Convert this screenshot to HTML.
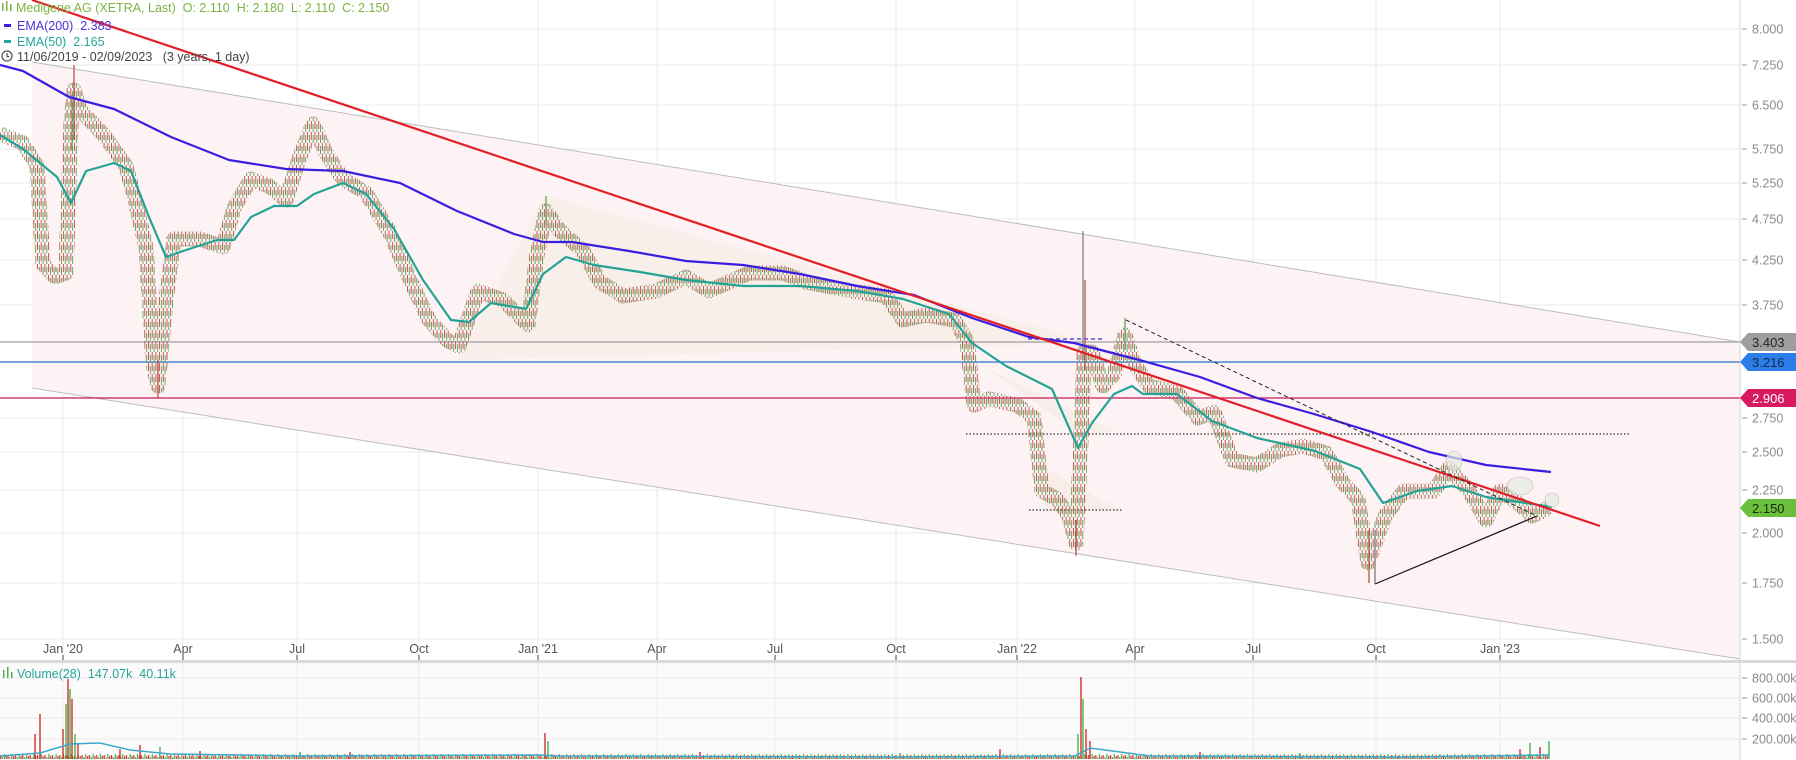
<!DOCTYPE html>
<html><head><meta charset="utf-8"><style>
html,body{margin:0;padding:0;background:#fff;width:1796px;height:760px;overflow:hidden}
svg{display:block;font-family:"Liberation Sans",sans-serif}
</style></head><body>
<svg width="1796" height="760" xmlns="http://www.w3.org/2000/svg">
<defs>
<pattern id="bp" patternUnits="userSpaceOnUse" width="3.7" height="11">
<rect x="0" y="0" width="1" height="8" fill="#b5473c"/>
<rect x="1.85" y="3" width="1" height="8" fill="#5b9a4f"/>
</pattern>
<pattern id="vp" patternUnits="userSpaceOnUse" x="0" y="753" width="7.4" height="6">
<rect x="0" y="2" width="1.2" height="4" fill="#d32f2f"/>
<rect x="1.85" y="4" width="1.2" height="2" fill="#4caf50"/>
<rect x="3.7" y="1" width="1.2" height="5" fill="#4caf50"/>
<rect x="5.55" y="3" width="1.2" height="3" fill="#d32f2f"/>
</pattern>
</defs>
<rect x="0" y="0" width="1796" height="760" fill="#fff"/>
<rect x="0" y="663" width="1740" height="97" fill="#fbfbfb"/>
<g stroke="#ebebeb" stroke-width="1">
<line x1="0" y1="29" x2="1740" y2="29"/><line x1="0" y1="65" x2="1740" y2="65"/><line x1="0" y1="105" x2="1740" y2="105"/><line x1="0" y1="149" x2="1740" y2="149"/><line x1="0" y1="183" x2="1740" y2="183"/><line x1="0" y1="219" x2="1740" y2="219"/><line x1="0" y1="260" x2="1740" y2="260"/><line x1="0" y1="305" x2="1740" y2="305"/><line x1="0" y1="418" x2="1740" y2="418"/><line x1="0" y1="452" x2="1740" y2="452"/><line x1="0" y1="490" x2="1740" y2="490"/><line x1="0" y1="533" x2="1740" y2="533"/><line x1="0" y1="583" x2="1740" y2="583"/><line x1="0" y1="639" x2="1740" y2="639"/>
<line x1="0" y1="678" x2="1740" y2="678"/><line x1="0" y1="698" x2="1740" y2="698"/><line x1="0" y1="718" x2="1740" y2="718"/><line x1="0" y1="739" x2="1740" y2="739"/>
<line x1="63" y1="0" x2="63" y2="760"/><line x1="183" y1="0" x2="183" y2="760"/><line x1="297" y1="0" x2="297" y2="760"/><line x1="419" y1="0" x2="419" y2="760"/><line x1="538" y1="0" x2="538" y2="760"/><line x1="657" y1="0" x2="657" y2="760"/><line x1="775" y1="0" x2="775" y2="760"/><line x1="896" y1="0" x2="896" y2="760"/><line x1="1017" y1="0" x2="1017" y2="760"/><line x1="1135" y1="0" x2="1135" y2="760"/><line x1="1253" y1="0" x2="1253" y2="760"/><line x1="1376" y1="0" x2="1376" y2="760"/><line x1="1500" y1="0" x2="1500" y2="760"/>
</g>
<polygon points="32,62 1740,342 1740,659 32,388" fill="#fdf2f4"/>
<polygon points="458,360 545,196 1097,343" fill="#f6eee9" opacity="0.8"/>
<polygon points="983,366 1115,432 1080,434" fill="#f8ebe6" opacity="0.8"/>
<polygon points="1045,468 1120,510 1045,510" fill="#f8ebe6" opacity="0.8"/>
<line x1="32" y1="62" x2="1740" y2="342" stroke="#bdbdbd" stroke-width="1"/>
<line x1="32" y1="388" x2="1740" y2="659" stroke="#bdbdbd" stroke-width="1"/>
<line x1="0" y1="342" x2="1740" y2="342" stroke="#9e9e9e" stroke-width="1.2"/>
<line x1="0" y1="362" x2="1740" y2="362" stroke="#2a6fc9" stroke-width="1.2"/>
<line x1="0" y1="398" x2="1740" y2="398" stroke="#c2185b" stroke-width="1.2"/>
<line x1="966" y1="434" x2="1629" y2="434" stroke="#333" stroke-width="1.2" stroke-dasharray="1.5,2"/>
<line x1="1029" y1="510" x2="1122" y2="510" stroke="#333" stroke-width="1.2" stroke-dasharray="1.5,2"/>
<line x1="1028" y1="339" x2="1104" y2="339" stroke="#5b4ee8" stroke-width="1.5" stroke-dasharray="4,3"/>
<!-- price bars -->
<polyline fill="none" stroke="url(#bp)" stroke-width="15" stroke-linejoin="round" opacity="0.9" points="0,134 23,143 37,166 43,264 55,277 66,273 71,122 74,90 80,110 103,134 126,166 135,200 146,247 153,363 158,386 166,300 174,239 200,239 223,247 234,208 251,179 269,186 286,200 299,159 313,124 326,153 343,179 366,193 389,231 411,282 429,320 448,341 459,346 478,291 503,300 528,325 537,255 546,211 560,231 583,251 600,282 623,296 656,291 686,277 709,291 749,273 783,273 806,282 852,291 886,296 903,320 926,315 954,320 967,341 974,405 989,399 1017,405 1034,418 1042,491 1057,499 1069,516 1076,543 1081,439 1084,352 1092,352 1103,386 1114,374 1125,335 1134,363 1149,386 1177,393 1198,418 1214,412 1232,460 1257,465 1280,450 1303,446 1326,453 1343,483 1358,499 1368,563 1385,516 1404,491 1434,491 1449,468 1469,491 1486,520 1500,491 1518,503 1532,516 1549,508"/>
<g stroke-width="1.2">
<line x1="74" y1="65" x2="74" y2="140" stroke="#b5473c"/>
<line x1="72" y1="95" x2="72" y2="150" stroke="#5b9a4f"/>
<line x1="1083" y1="231" x2="1083" y2="360" stroke="#777"/>
<line x1="1085" y1="280" x2="1085" y2="370" stroke="#b5473c"/>
<line x1="546" y1="196" x2="546" y2="225" stroke="#5b9a4f"/>
<line x1="158" y1="360" x2="158" y2="398" stroke="#b5473c"/>
<line x1="1076" y1="520" x2="1076" y2="556" stroke="#b5473c"/>
<line x1="1369" y1="530" x2="1369" y2="583" stroke="#b5473c"/>
<line x1="1125" y1="318" x2="1125" y2="350" stroke="#5b9a4f"/>
</g>
<!-- EMAs -->
<polyline fill="none" stroke="#3a1ee0" stroke-width="2.2" stroke-linejoin="round" points="0,65 23,71 69,97 114,109 171,137 229,160 286,169 343,171 400,183 457,211 514,234 543,242 572,242 629,251 686,261 743,265 800,274 857,286 914,295 972,318 1029,337 1074,343 1097,349 1143,361 1200,377 1257,398 1314,414 1372,432 1429,452 1486,465 1551,472"/>
<polyline fill="none" stroke="#22a395" stroke-width="2.2" stroke-linejoin="round" points="0,135 23,149 57,177 71,203 86,171 114,163 131,171 149,217 166,257 183,251 217,240 234,240 251,217 274,206 297,206 314,194 343,183 366,194 394,229 423,280 451,320 469,322 491,303 526,309 543,274 566,257 594,265 640,272 686,280 743,286 800,286 857,291 903,299 949,314 972,343 1006,366 1052,389 1078,448 1092,423 1114,394 1132,386 1143,394 1177,394 1212,421 1257,438 1315,451 1360,469 1383,503 1417,491 1452,486 1486,497 1552,507"/>
<line x1="32" y1="0" x2="1600" y2="526" stroke="#e21f26" stroke-width="2.2"/>
<line x1="1126" y1="320" x2="1537" y2="516" stroke="#222" stroke-width="1" stroke-dasharray="4,3"/>
<line x1="1375" y1="584" x2="1537" y2="516" stroke="#111" stroke-width="1.2"/>
<line x1="1375" y1="584" x2="1375" y2="530" stroke="#555" stroke-width="1"/>
<ellipse cx="1454" cy="461" rx="8" ry="10" fill="#e6ebe4" opacity="0.7" stroke="#aaa" stroke-width="0.6"/>
<ellipse cx="1520" cy="486" rx="13" ry="9" fill="#e6ebe4" opacity="0.7" stroke="#aaa" stroke-width="0.6"/>
<ellipse cx="1552" cy="500" rx="7" ry="7" fill="#e6ebe4" opacity="0.7" stroke="#aaa" stroke-width="0.6"/>
<rect x="0" y="660" width="1796" height="3" fill="#d9d9d9"/>
<line x1="1740" y1="0" x2="1740" y2="760" stroke="#d6d6d6" stroke-width="1"/>
<!-- volume -->
<rect x="0" y="753" width="1549" height="6" fill="url(#vp)"/>
<path stroke-width="1.4" stroke="#d32f2f" fill="none" d="M35 759V734M40 759V714M63 759V729M68 759V679M72 759V699M78 759V744M120 759V749M140 759V745M200 759V751M350 759V752M545 759V733M700 759V752M1000 759V749M1081 759V677M1086 759V729M1090 759V741M1200 759V752M1520 759V749M1540 759V747"/>
<path stroke-width="1.4" stroke="#4caf50" fill="none" d="M66 759V704M70 759V689M75 759V734M160 759V747M300 759V752M548 759V741M900 759V753M1078 759V734M1083 759V699M1300 759V753M1530 759V743M1549 759V741"/>
<polyline fill="none" stroke="#3fa7c9" stroke-width="1.5" points="0,756 40,753 70,744 100,743 130,750 170,754 300,756 540,755 560,756 900,757 1075,756 1090,748 1120,752 1150,756 1400,757 1549,755"/>
<!-- axis -->
<g font-size="12.5" fill="#8a8a8a">
<g stroke="#999"><path d="M1742 29h5M1742 65h5M1742 105h5M1742 149h5M1742 183h5M1742 219h5M1742 260h5M1742 305h5M1742 418h5M1742 452h5M1742 490h5M1742 533h5M1742 583h5M1742 639h5M1742 678h5M1742 698h5M1742 718h5M1742 739h5"/></g>
<text x="1752" y="33.5">8.000</text><text x="1752" y="69.5">7.250</text><text x="1752" y="109.5">6.500</text><text x="1752" y="153.5">5.750</text><text x="1752" y="187.5">5.250</text><text x="1752" y="223.5">4.750</text><text x="1752" y="264.5">4.250</text><text x="1752" y="309.5">3.750</text><text x="1752" y="422.5">2.750</text><text x="1752" y="456.5">2.500</text><text x="1752" y="494.5">2.250</text><text x="1752" y="537.5">2.000</text><text x="1752" y="587.5">1.750</text><text x="1752" y="643.5">1.500</text>
<text x="1752" y="682.5">800.00k</text><text x="1752" y="702.5">600.00k</text><text x="1752" y="722.5">400.00k</text><text x="1752" y="743.5">200.00k</text>
<g stroke="#444"><path d="M63 655v5M183 655v5M297 655v5M419 655v5M538 655v5M657 655v5M775 655v5M896 655v5M1017 655v5M1135 655v5M1253 655v5M1376 655v5M1500 655v5"/></g>
<g fill="#555" text-anchor="middle">
<text x="63" y="653">Jan '20</text><text x="183" y="653">Apr</text><text x="297" y="653">Jul</text><text x="419" y="653">Oct</text><text x="538" y="653">Jan '21</text><text x="657" y="653">Apr</text><text x="775" y="653">Jul</text><text x="896" y="653">Oct</text><text x="1017" y="653">Jan '22</text><text x="1135" y="653">Apr</text><text x="1253" y="653">Jul</text><text x="1376" y="653">Oct</text><text x="1500" y="653">Jan '23</text>
</g>
</g>
<g font-size="13">
<polygon points="1740,342 1748,333 1796,333 1796,351 1748,351" fill="#9e9e9e"/><text x="1752" y="347" fill="#222">3.403</text>
<polygon points="1740,362 1748,353 1796,353 1796,371 1748,371" fill="#2b7de9"/><text x="1752" y="367" fill="#1a2a44">3.216</text>
<polygon points="1740,398 1748,389 1796,389 1796,407 1748,407" fill="#d81b60"/><text x="1752" y="403" fill="#fff">2.906</text>
<polygon points="1740,508 1748,499 1796,499 1796,517 1748,517" fill="#6abf3c"/><text x="1752" y="513" fill="#1a2a10">2.150</text>
</g>
<!-- legend -->
<g font-size="12.5">
<g fill="#7cb342"><rect x="2" y="3" width="1.5" height="8"/><rect x="6" y="1" width="1.5" height="10"/><rect x="10" y="4" width="1.5" height="7"/></g>
<text x="16" y="12" fill="#7cb342" xml:space="preserve">Medigene AG (XETRA, Last)  O: 2.110  H: 2.180  L: 2.110  C: 2.150</text>
<rect x="4" y="24" width="7" height="3" fill="#3a1ee0"/>
<text x="17" y="30" fill="#4a33dd" xml:space="preserve">EMA(200)  2.383</text>
<rect x="4" y="40" width="7" height="3" fill="#26a69a"/>
<text x="17" y="46" fill="#26a69a" xml:space="preserve">EMA(50)  2.165</text>
<circle cx="7" cy="56" r="5" fill="none" stroke="#555" stroke-width="1.3"/><path d="M7 53v3.5h2.5" stroke="#555" stroke-width="1.2" fill="none"/>
<text x="17" y="61" fill="#444" xml:space="preserve">11/06/2019 - 02/09/2023   (3 years, 1 day)</text>
<g fill="#4caf50"><rect x="3" y="670" width="1.5" height="8"/><rect x="7" y="667" width="1.5" height="11"/><rect x="11" y="672" width="1.5" height="6"/></g>
<text x="17" y="678" fill="#26a69a" xml:space="preserve">Volume(28)  147.07k  40.11k</text>
</g>
</svg>
</body></html>
